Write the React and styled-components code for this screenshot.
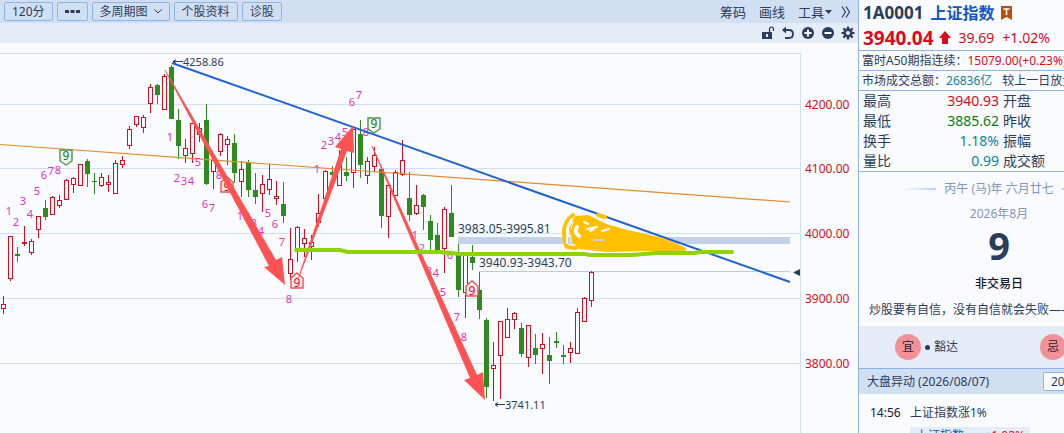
import React from 'react'
import styled, { createGlobalStyle } from 'styled-components'

const color = {
  ink: '#2b3d5b',
  up: '#d90b1c',
  down: '#2e8b1e',
  green: '#137a13',
  teal: '#0a84a0',
  muted: '#8296bd',
  border: '#8db5ea',
  grid: '#cfdff1',
  paper: '#fafbff',
  bar: '#d1dff2',
  band: '#e5ecf7',
  mark: '#e032bd',
  arrow: '#ff5353',
}

const GlobalStyle = createGlobalStyle`
  * {
    box-sizing: border-box;
  }
  body {
    margin: 0;
    overflow: hidden;
    background: ${color.paper};
    color: ${color.ink};
    font: 12px/18px "Noto Sans", "Noto Sans CJK SC", sans-serif;
  }
  button, select {
    font: inherit;
    color: inherit;
  }
`

const Page = styled.div`
  display: flex;
  height: 100vh;
  overflow: hidden;
`

const ChartPane = styled.main`
  flex: 1;
  min-width: 0;
`

const Toolbar = styled.div`
  display: flex;
  align-items: center;
  justify-content: space-between;
  height: 23px;
  padding: 0 7px 0 4px;
  background: ${color.bar};
`

const Group = styled.div`
  display: flex;
  align-items: center;
  gap: ${p => p.$gap}px;
`

const PeriodButton = styled.button`
  display: flex;
  align-items: center;
  gap: 6px;
  height: 19px;
  padding: 0 7px;
  border: 1px solid ${color.border};
  border-radius: 2px;
  background: transparent;
  line-height: 16px;
  white-space: nowrap;
`

const ToolButton = styled.button`
  display: flex;
  align-items: center;
  padding: 0;
  border: 0;
  background: transparent;
  font-size: 13px;
  white-space: nowrap;
`

const IconBar = styled.div`
  display: flex;
  align-items: center;
  justify-content: flex-end;
  gap: 6px;
  height: 20px;
  padding-right: 3px;
  background: ${color.band};
`

const IconButton = styled.button`
  display: flex;
  padding: 0;
  border: 0;
  background: transparent;
`

const Chart = styled.svg`
  display: block;
  width: 100%;
  height: auto;
`

const Sidebar = styled.aside`
  flex: 0 0 206px;
  overflow: hidden;
  border-left: 1px solid ${color.border};
`

const SidebarBody = styled.div`
  min-width: 280px;
`

const Title = styled.h1`
  display: flex;
  align-items: center;
  gap: 7px;
  height: 25px;
  margin: 0;
  padding-left: 4px;
  font-size: 17px;
  line-height: 24px;
`

const IndexName = styled.span`
  color: #1457c0;
  font-size: 16px;
  font-weight: 700;
`

const PriceLine = styled.div`
  display: flex;
  align-items: center;
  height: 25px;
  padding-left: 4px;
  color: ${color.up};
  font-size: 14px;
`

const Price = styled.strong`
  margin-right: 5px;
  font-size: 19px;
`

const Change = styled.span`
  margin-left: ${p => p.$space}px;
`

const InfoLine = styled.div`
  display: flex;
  height: 20px;
  padding-left: 3px;
  border-top: 1px solid ${color.border};
  line-height: 19px;
  white-space: nowrap;
`

const Value = styled.span`
  color: ${p => color[p.$tone]};
`

const QuoteTable = styled.table`
  width: 100%;
  table-layout: fixed;
  border-collapse: collapse;
  border-top: 1px solid ${color.border};
  border-bottom: 1px solid ${color.border};
  font-size: 14px;
  line-height: 20px;

  th {
    padding: 0 0 0 4px;
    font-weight: 400;
    text-align: left;
  }
  th:first-child {
    width: 40px;
  }
  td {
    width: 100px;
    padding: 0;
    text-align: right;
  }
`

const Calendar = styled.section`
  display: flex;
  flex-direction: column;
  align-items: center;
  height: 154px;
  padding-top: 8px;
  white-space: nowrap;
`

const Lunar = styled.div`
  display: flex;
  align-items: center;
  gap: 8px;
  color: ${color.muted};
`

const Rule = styled.i`
  width: 34px;
  height: 2px;
  background: linear-gradient(${p => p.$to}, transparent, #b8cff2);
`

const Month = styled.div`
  margin-top: 7px;
  color: ${color.muted};
`

const Day = styled.strong`
  margin-top: 1px;
  font-size: 38px;
  line-height: 42px;
`

const DayNote = styled.div`
  margin-top: 9px;
  color: #111a2c;
  font-weight: 500;
`

const Motto = styled.p`
  align-self: flex-start;
  margin: 8px 0 0;
  padding-left: 10px;
`

const Advice = styled.div`
  display: flex;
  align-items: center;
  height: 42px;
  padding-left: 36px;
  background: ${color.band};
`

const Seal = styled.span`
  width: 26px;
  height: 26px;
  border-radius: 50%;
  background: #f29296;
  color: #1b2438;
  line-height: 26px;
  text-align: center;
`

const AdviceText = styled.span`
  display: flex;
  align-items: center;
  gap: 4px;
  width: 119px;
  padding-left: 4px;

  &::before {
    content: '';
    width: 5px;
    height: 5px;
    border-radius: 50%;
    background: ${color.ink};
  }
`

const AlertHeader = styled.header`
  display: flex;
  align-items: center;
  height: 26px;
  padding-left: 8px;
  border-top: 1px solid ${color.border};
  background: ${color.bar};
`

const AlertTitle = styled.label`
  width: 176px;
`

const DateSelect = styled.select`
  width: 90px;
  height: 19px;
  padding: 0 7px;
  border: 1px solid ${color.border};
  border-radius: 2px;
  background: ${color.paper};
  appearance: none;
`

const AlertRow = styled.div`
  display: flex;
  gap: 8px;
  padding: 10px 0 0 11px;
`

const Time = styled.time`
  width: 32px;
  color: #111a2c;
`

const AlertLink = styled.a`
  display: flex;
  justify-content: space-between;
  width: 120px;
  margin-top: 5px;
  padding: 0 5px 0 6px;
  background: ${color.band};
  color: #1457c0;
  text-decoration: none;
`

// one entry per bar: high, body top, body bottom, low, up (1) or down (0)
const candles = [
  [296, 304, 309, 314, 1], [236, 236, 279, 281, 1], [247, 254, 256, 262, 0], [226, 242, 244, 246, 1],
  [239, 241, 253, 255, 1], [216, 216, 230, 238, 1], [200, 208, 217, 220, 0], [196, 197, 215, 215, 1],
  [195, 200, 206, 208, 1], [179, 180, 200, 200, 1], [177, 178, 185, 193, 1], [164, 164, 186, 186, 1],
  [159, 161, 174, 187, 0], [173, 181, 182, 194, 0], [173, 177, 186, 187, 1], [175, 182, 185, 192, 1],
  [160, 163, 194, 194, 1], [156, 160, 165, 168, 1], [126, 129, 146, 149, 1], [116, 116, 125, 127, 1],
  [115, 117, 128, 133, 1], [84, 87, 104, 113, 1], [84, 85, 95, 104, 0], [74, 76, 110, 110, 1],
  [65, 67, 119, 119, 0], [109, 120, 146, 159, 0], [139, 148, 156, 163, 1], [123, 123, 154, 163, 1],
  [123, 128, 135, 142, 1], [104, 120, 184, 185, 0], [159, 160, 172, 189, 1], [133, 134, 152, 156, 1],
  [136, 139, 145, 165, 1], [134, 143, 173, 183, 0], [161, 169, 182, 197, 1], [160, 163, 190, 197, 0],
  [173, 190, 197, 204, 0], [175, 184, 194, 212, 1], [164, 179, 190, 195, 1], [181, 196, 199, 205, 1],
  [182, 204, 216, 223, 0], [228, 259, 274, 280, 1], [226, 227, 252, 262, 1], [229, 238, 244, 257, 1],
  [235, 242, 247, 260, 1], [194, 213, 223, 227, 1], [170, 171, 199, 199, 1], [166, 172, 175, 177, 0],
  [150, 165, 186, 186, 1], [157, 172, 176, 181, 0], [129, 129, 173, 188, 1], [120, 134, 165, 178, 0],
  [157, 161, 176, 184, 1], [147, 155, 167, 172, 1], [168, 169, 216, 228, 0], [184, 185, 217, 238, 1],
  [170, 172, 196, 196, 1], [140, 160, 175, 176, 1], [172, 198, 215, 221, 0], [185, 205, 214, 215, 1],
  [194, 195, 207, 230, 0], [215, 221, 240, 250, 0], [223, 235, 251, 251, 0], [207, 209, 249, 273, 1],
  [185, 213, 237, 237, 0], [244, 254, 290, 297, 0], [255, 255, 293, 318, 1], [245, 257, 263, 270, 0],
  [272, 290, 310, 319, 0], [318, 320, 387, 398, 0], [342, 365, 369, 401, 1], [321, 321, 356, 399, 1],
  [308, 319, 338, 338, 1], [312, 313, 320, 329, 1], [323, 328, 354, 357, 0], [325, 325, 358, 367, 1],
  [334, 348, 355, 364, 0], [333, 344, 349, 374, 1], [337, 355, 361, 384, 0], [332, 341, 343, 348, 0],
  [345, 355, 357, 364, 0], [342, 348, 353, 363, 1], [308, 312, 354, 354, 1], [297, 298, 322, 322, 1],
  [271, 272, 301, 307, 1],
]

// sequence counts: digit, centre x, baseline y
const counts = [
  [1, 9, 215], [2, 16, 226], [3, 23, 205], [4, 30, 218], [5, 37, 195], [6, 44, 179], [7, 51, 175], [8, 58, 174],
  [1, 170, 141], [2, 177, 182], [3, 184, 185], [4, 191, 185], [5, 198, 166], [6, 205, 208], [7, 212, 212], [8, 219, 179],
  [1, 240, 220], [2, 247, 220], [3, 254, 227], [4, 261, 235], [5, 268, 217], [6, 275, 228], [7, 282, 246], [8, 289, 303],
  [1, 317, 173], [2, 324, 149], [3, 331, 145], [4, 338, 141], [5, 345, 136], [6, 352, 106], [7, 359, 99], [8, 366, 136],
  [1, 415, 239], [2, 422, 252], [3, 429, 275], [4, 436, 277], [5, 443, 296], [6, 450, 259], [7, 457, 321], [8, 464, 341],
]

const levels = [
  [104, '4200.00'],
  [168, '4100.00'],
  [233, '4000.00'],
  [298, '3900.00'],
  [363, '3800.00'],
]

const quotes = [
  ['最高', '3940.93', 'up', '开盘'],
  ['最低', '3885.62', 'green', '昨收'],
  ['换手', '1.18%', 'teal', '振幅'],
  ['量比', '0.99', 'teal', '成交额'],
]

const Candle = ({ x, data: [high, top, bottom, low, up] }) => {
  const fill = up ? color.up : color.down
  const hollow = up && bottom - top > 2
  return (
    <g shapeRendering="crispEdges">
      <rect x={x} y={high} width="1" height={low - high} fill={fill} />
      <rect x={x - 2} y={top} width="5" height={bottom - top} fill={fill} />
      {hollow && <rect x={x - 1} y={top + 1} width="3" height={bottom - top - 2} fill={color.paper} />}
    </g>
  )
}

const Nine = ({ x, y, up }) => (
  <g>
    <path
      d={up ? 'M1 6 L7 1 L13 6 V16 H1 Z' : 'M1 1 H13 V12 L7 16 L1 12 Z'}
      transform={`translate(${x} ${y})`}
      fill={up ? '#fde9ea' : '#f2f9f1'}
      stroke={up ? '#e0555c' : '#4d9445'}
      strokeWidth="1.4"
    />
    <text x={x + 7} y={up ? y + 15 : y + 11} textAnchor="middle" fontSize="12" fill={up ? color.up : color.green}>
      9
    </text>
  </g>
)

const PriceChart = () => (
  <Chart viewBox="0 43 858 390" role="img" aria-label="上证指数 120分">
    <g fill={color.grid} shapeRendering="crispEdges">
      <rect x="0" y="53" width="801" height="1" />
      <rect x="800" y="53" width="1" height="380" />
      {levels.map(([y]) => (
        <rect key={y} x="0" y={y} width="801" height="1" />
      ))}
    </g>
    <g fontSize="12" fill={color.up}>
      {levels.map(([y, label]) => (
        <text key={y} x="805" y={y + 5}>{label}</text>
      ))}
    </g>
    <path d="M800 269 V276 L793 272.500 Z" fill={color.ink} />

    <rect x="458" y="237" width="332" height="7" fill="#c4d1e6" />
    <rect x="479" y="271" width="311" height="1" fill="#b9cce3" />
    {candles.map((data, i) => (
      <Candle key={i} x={3 + i * 7} data={data} />
    ))}
    <path d="M0 144.500 L790 202" stroke="#e58a2b" strokeWidth="1.2" />

    <g fontSize="11" fill={color.mark} textAnchor="middle">
      {counts.map(([n, x, y]) => (
        <text key={`${x}-${y}`} x={x} y={y}>{n}</text>
      ))}
    </g>
    <Nine x={59} y={149} />
    <Nine x={367} y={117} />
    <Nine x={220} y={176} up />
    <Nine x={290} y={272} up />
    <Nine x={465} y={280} up />

    <path d="M172 63 L790 282" stroke="#1c62d2" strokeWidth="2" />
    <g fill={color.ink}>
      <text x="183" y="66" fontSize="11">4258.86</text>
      <text x="505" y="409" fontSize="11">3741.11</text>
      <text x="458" y="233" fontSize="12">3983.05-3995.81</text>
      <text x="479" y="267" fontSize="12">3940.93-3943.70</text>
    </g>
    <g fill="none" stroke={color.ink}>
      <path d="M183 61.500 H173 M176 59.500 L173 61.500 L176 63.500" />
      <path d="M505 404.500 H495 M498 402.500 L495 404.500 L498 406.500" />
    </g>

    <g fill={color.arrow}>
      <path d="M164.500 70 L165.500 70 L276 260 L282 257 L285 285 L264 267 L269 266 Z" />
      <path d="M298 278 L299 278 L347 151 L354 153 L353 126 L335 147 L341 149 Z" />
      <path d="M371.500 146 L372.500 146 L477 375 L483 372 L485 400 L464 380 L470 378 Z" />
    </g>

    <g fill="none" stroke="#ffc000" strokeLinecap="round" strokeLinejoin="round">
      <path
        d="M576 218 L588 217 L606 226 L623 231 L663 240 L684 249 L650 249 L606 250 L580 247 L573 240 L571 229 Z"
        fill="#ffc000"
        strokeWidth="4"
      />
      <path d="M573 215 Q564 222 564 232 Q564 243 567 247 L576 248" strokeWidth="4" />
      <path d="M598 215 L605 217" strokeWidth="4" />
    </g>
    {/* gaps left between the marker strokes */}
    <g fill="none" stroke={color.paper} strokeLinecap="round">
      <path d="M572 219 Q567 224 567 233 V243" strokeWidth="2" />
      <path d="M571 235 V242 M571 229 L573 222" strokeWidth="1" />
      <path d="M577 227 Q574 233 579 236" strokeWidth="4" />
      <path d="M584 222 L588 224 M587 229 L597 227 M590 231 L594 229 M602 231 L609 229" strokeWidth="2" />
      <path d="M594 240 H603" stroke="#c4d1e6" strokeWidth="2" />
    </g>
    <path
      d="M296 250 H340 L348 252 H440 L460 254 H585 L590 255 H632 L656 253 H694 L700 252 H732"
      fill="none"
      stroke="#8fd400"
      strokeWidth="4"
      strokeLinecap="round"
      strokeLinejoin="round"
    />
  </Chart>
)

const Icon = ({ children }) => (
  <svg width="14" height="14" viewBox="0 0 14 14" fill={color.ink}>
    {children}
  </svg>
)

const tools = [
  ['解锁', <Icon>
    <path d="M1 6 H11 V13 H1 Z M5 8 V11 H7 V8 Z" fillRule="evenodd" />
    <path d="M8.500 6 V3.500 Q8.500 1 10.500 1 Q12.500 1 12.500 3.500 V5" fill="none" stroke={color.ink} strokeWidth="1.2" />
  </Icon>],
  ['撤销', <Icon>
    <path d="M3 4 H8 Q12 4 12 8 Q12 12 8 12 H4" fill="none" stroke={color.ink} strokeWidth="1.8" />
    <path d="M5 0.500 V7.500 L1 4 Z" />
  </Icon>],
  ['放大', <Icon>
    <circle cx="7" cy="7" r="6" />
    <path d="M7 3.500 V10.500 M3.500 7 H10.500" stroke="#fff" strokeWidth="2" />
  </Icon>],
  ['缩小', <Icon>
    <circle cx="7" cy="7" r="6" />
    <path d="M3.500 7 H10.500" stroke="#fff" strokeWidth="2" />
  </Icon>],
  ['设置', <Icon>
    <circle cx="7" cy="7" r="3.400" fill="none" stroke={color.ink} strokeWidth="2.600" />
    <path d="M7 0.500 V3 M7 11 V13.500 M0.500 7 H3 M11 7 H13.500 M2.400 2.400 L4 4 M10 10 L11.600 11.600 M2.400 11.600 L4 10 M10 4 L11.600 2.400" stroke={color.ink} strokeWidth="2.200" />
  </Icon>],
]

const ChartHeader = () => (
  <>
    <Toolbar>
      <Group $gap={4}>
        <PeriodButton>120分</PeriodButton>
        <PeriodButton aria-label="更多周期">
          <svg width="15" height="4" viewBox="0 0 15 4" fill={color.ink}>
            <path d="M0 0 H4 V3 H0 Z M5.500 0 H9.500 V3 H5.500 Z M11 0 H15 V3 H11 Z" />
          </svg>
        </PeriodButton>
        <PeriodButton>
          多周期图
          <svg width="8" height="5" viewBox="0 0 8 5" fill="none" stroke={color.ink}>
            <path d="M0.500 0.500 L4 4 L7.500 0.500" />
          </svg>
        </PeriodButton>
        <PeriodButton>个股资料</PeriodButton>
        <PeriodButton>诊股</PeriodButton>
      </Group>
      <Group $gap={13}>
        <ToolButton>筹码</ToolButton>
        <ToolButton>画线</ToolButton>
        <Group $gap={9}>
          <ToolButton>
            工具
            <svg width="8" height="4" viewBox="0 0 8 4" fill={color.ink}>
              <path d="M1 0 H8 L4.500 4 Z" />
            </svg>
          </ToolButton>
          <ToolButton aria-label="展开">
            <svg width="10" height="12" viewBox="0 0 10 12" fill="none" stroke={color.ink} strokeWidth="1.2">
              <path d="M1 0.500 L4.500 6 L1 11.500 M5 0.500 L8.500 6 L5 11.500" />
            </svg>
          </ToolButton>
        </Group>
      </Group>
    </Toolbar>
    <IconBar>
      {tools.map(([label, icon]) => (
        <IconButton key={label} aria-label={label}>{icon}</IconButton>
      ))}
    </IconBar>
  </>
)

const Quote = () => (
  <>
    <Title>
      1A0001 <IndexName>上证指数</IndexName>
      <svg width="11" height="14" viewBox="0 0 11 14">
        <path d="M0 0 H11 V14 L5.500 11 L0 14 Z" fill="#b9500d" />
        <path d="M2.500 3 H8.500 M5.500 3 V9" stroke="#fff" strokeWidth="1.600" />
      </svg>
    </Title>
    <PriceLine>
      <Price>3940.04</Price>
      <svg width="12" height="13" viewBox="0 0 12 13" fill={color.up}>
        <path d="M6 0 L12 7 H9 V13 H3 V7 H0 Z" />
      </svg>
      <Change $space={8}>39.69</Change>
      <Change $space={8}>+1.02%</Change>
    </PriceLine>
    <InfoLine>
      富时A50期指连续：<Value $tone="up">15079.00(+0.23%)</Value>
    </InfoLine>
    <InfoLine>
      市场成交总额：<Value $tone="teal">26836亿</Value>
      <Change $space={10}>较上一日放量</Change>
    </InfoLine>
    <QuoteTable>
      <tbody>
        {quotes.map(([name, value, tone, next]) => (
          <tr key={name}>
            <th scope="row">{name}</th>
            <td><Value $tone={tone}>{value}</Value></td>
            <th scope="row">{next}</th>
          </tr>
        ))}
      </tbody>
    </QuoteTable>
  </>
)

const Almanac = () => (
  <>
    <Calendar>
      <Lunar>
        <Rule $to="to right" />
        丙午 (马)年 六月廿七
        <Rule $to="to left" />
      </Lunar>
      <Month>2026年8月</Month>
      <Day>9</Day>
      <DayNote>非交易日</DayNote>
      <Motto>炒股要有自信，没有自信就会失败——</Motto>
    </Calendar>
    <Advice>
      <Seal>宜</Seal>
      <AdviceText>豁达</AdviceText>
      <Seal>忌</Seal>
    </Advice>
  </>
)

const Alerts = () => (
  <section>
    <AlertHeader>
      <AlertTitle htmlFor="alert-date">大盘异动 (2026/08/07)</AlertTitle>
      <DateSelect id="alert-date">
        <option>2026/08/07</option>
      </DateSelect>
    </AlertHeader>
    <AlertRow>
      <Time>14:56</Time>
      <div>
        上证指数涨1%
        <AlertLink href="#index">
          上证指数 <Value $tone="up">+1.02%</Value>
        </AlertLink>
      </div>
    </AlertRow>
  </section>
)

const App = () => (
  <Page>
    <GlobalStyle />
    <ChartPane>
      <ChartHeader />
      <PriceChart />
    </ChartPane>
    <Sidebar>
      <SidebarBody>
        <Quote />
        <Almanac />
        <Alerts />
      </SidebarBody>
    </Sidebar>
  </Page>
)

export default App
